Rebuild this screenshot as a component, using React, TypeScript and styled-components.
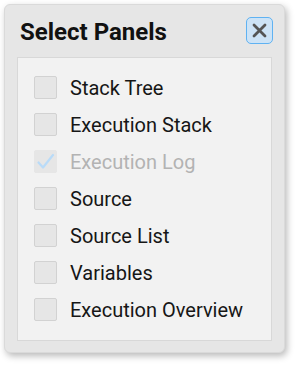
import styled, { createGlobalStyle } from "styled-components";

const GlobalStyle = createGlobalStyle`
  html, body {
    margin: 0;
    padding: 0;
    background: #ffffff;
  }
  body {
    font-family: Roboto, "Liberation Sans", sans-serif;
  }
`;

const Page = styled.div`
  width: 300px;
  height: 367px;
  padding: 4px 0 0 4px;
  box-sizing: border-box;
`;

const Dialog = styled.div`
  width: 281px;
  height: 349px;
  box-sizing: border-box;
  background: #e6e6e6;
  border: 1px solid #dadada;
  border-radius: 6px;
  box-shadow: 2px 3px 7px rgba(0, 0, 0, 0.28);
  padding: 0 12px 0 12px;
  display: flex;
  flex-direction: column;
`;

const Header = styled.div`
  height: 52px;
  display: flex;
  align-items: center;
  justify-content: space-between;
  padding: 2px 0 0 3px;
  box-sizing: border-box;
`;

const Title = styled.h1`
  margin: 0;
  font-size: 24px;
  line-height: 28px;
  font-weight: 700;
  color: #111;
`;

const CloseButton = styled.button`
  width: 27px;
  height: 27px;
  padding: 0;
  margin: -3px -1px 0 0;
  display: flex;
  align-items: center;
  justify-content: center;
  background: #cde3f6;
  border: 1px solid #5fb2f2;
  border-radius: 5px;
  cursor: pointer;
`;

const List = styled.div`
  width: 255px;
  height: 284px;
  box-sizing: border-box;
  background: #f2f2f2;
  border: 1px solid #d8d8d8;
  padding: 18px 0 0 16px;
  display: flex;
  flex-direction: column;
  gap: 14px;
`;

const Row = styled.label<{ $disabled?: boolean }>`
  display: flex;
  align-items: center;
  gap: 13px;
  height: 23px;
  font-size: 20px;
  color: ${(p) => (p.$disabled ? "#b3b3b3" : "#161616")};
  cursor: ${(p) => (p.$disabled ? "default" : "pointer")};
`;

const Box = styled.span<{ $disabled?: boolean }>`
  width: 23px;
  height: 23px;
  box-sizing: border-box;
  background: #e6e6e6;
  border: 1px solid ${(p) => (p.$disabled ? "#e6e6e6" : "#d2d2d2")};
  border-radius: 2px;
  display: flex;
  align-items: center;
  justify-content: center;
  flex-shrink: 0;
`;

const panels = [
  { name: "Stack Tree", checked: false, disabled: false },
  { name: "Execution Stack", checked: false, disabled: false },
  { name: "Execution Log", checked: true, disabled: true },
  { name: "Source", checked: false, disabled: false },
  { name: "Source List", checked: false, disabled: false },
  { name: "Variables", checked: false, disabled: false },
  { name: "Execution Overview", checked: false, disabled: false },
];

export default function App() {
  return (
    <>
      <GlobalStyle />
      <Page>
        <Dialog>
          <Header>
            <Title>Select Panels</Title>
            <CloseButton aria-label="Close">
              <svg width="15" height="15" viewBox="0 0 15 15">
                <path
                  d="M2 2 L13 13 M13 2 L2 13"
                  stroke="#555"
                  strokeWidth="2.8"
                  strokeLinecap="round"
                />
              </svg>
            </CloseButton>
          </Header>
          <List>
            {panels.map((p) => (
              <Row key={p.name} $disabled={p.disabled}>
                <Box $disabled={p.disabled}>
                  {p.checked && (
                    <svg width="19" height="19" viewBox="0 0 19 19">
                      <path
                        d="M2.5 10.5 L7 15.5 L17 3"
                        fill="none"
                        stroke="#b9dbf8"
                        strokeWidth="2.2"
                        strokeLinecap="round"
                        strokeLinejoin="round"
                      />
                    </svg>
                  )}
                </Box>
                {p.name}
              </Row>
            ))}
          </List>
        </Dialog>
      </Page>
    </>
  );
}
